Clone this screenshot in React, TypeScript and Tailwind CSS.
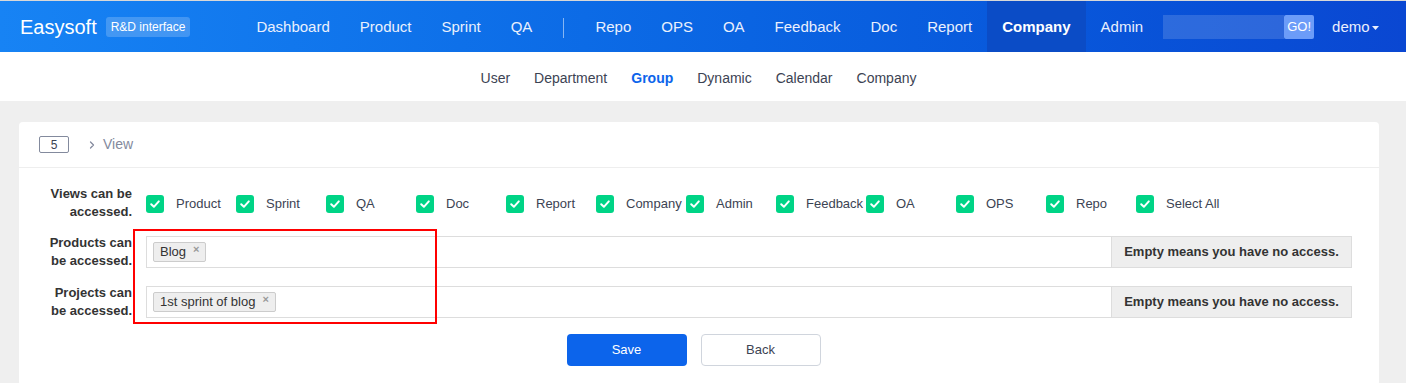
import { ChevronRight } from 'lucide-react';

const mainNav = ['Dashboard', 'Product', 'Sprint', 'QA'];
const rightNav = ['Repo', 'OPS', 'OA', 'Feedback', 'Doc', 'Report'];
const subNav = ['User', 'Department', 'Group', 'Dynamic', 'Calendar', 'Company'];
const views = ['Product', 'Sprint', 'QA', 'Doc', 'Report', 'Company', 'Admin', 'Feedback', 'OA', 'OPS', 'Repo', 'Select All'];

function Check() {
  return (
    <span className="w-[18px] h-[18px] rounded-[3px] bg-[#00d486] flex items-center justify-center shrink-0">
      <svg width="12" height="12" viewBox="0 0 12 12" fill="none">
        <path d="M2.2 6.2 L4.9 8.8 L9.8 3.4" stroke="white" strokeWidth="2" strokeLinecap="round" strokeLinejoin="round" />
      </svg>
    </span>
  );
}

function Tag({ label }: { label: string }) {
  return (
    <span className="inline-flex items-center h-[20px] pl-[6px] pr-[6px] bg-[#eee] border border-[#ccc] rounded-[2px] text-[13px] text-[#333]">
      {label}
      <span className="ml-[7px] text-[11px] text-[#999] leading-none -mt-[5px] font-bold">×</span>
    </span>
  );
}

function ChosenRow({ label, tag }: { label: [string, string]; tag: string }) {
  return (
    <div className="flex items-center mt-[14px]">
      <div className="w-[93px] text-right font-bold text-[13px] leading-[18px] text-[#333]">
        {label[0]}<br />{label[1]}
      </div>
      <div className="ml-[14px] flex-1 flex h-[32px]">
        <div className="flex-1 border border-[#ddd] border-r-0 flex items-center pl-[6px]">
          <Tag label={tag} />
        </div>
        <div className="w-[241px] bg-[#eee] border border-[#ddd] flex items-center justify-center font-bold text-[13px] text-[#333]">
          Empty means you have no access.
        </div>
      </div>
    </div>
  );
}

export default function App() {
  return (
    <div className="min-h-[383px] bg-[#efefef] font-['Liberation_Sans',Arial,sans-serif]">
      <header className="border-t border-[#d8d8d8] h-[52px] bg-gradient-to-r from-[#1783f4] to-[#0a47d2] flex items-center text-white">
        <span className="ml-[20px] text-[20px] leading-none">Easysoft</span>
        <span className="ml-[9px] h-[20px] px-[5px] rounded-[3px] bg-white/20 text-[12px] flex items-center">R&amp;D interface</span>
        <nav className="ml-[51px] flex items-center h-full text-[15px] text-[#eaf0fd] pt-[2px]">
          {mainNav.map((n) => (
            <span key={n} className="px-[15px]">{n}</span>
          ))}
          <span className="mx-[16px] w-px h-[20px] bg-white/50" />
          {rightNav.map((n) => (
            <span key={n} className="px-[15px]">{n}</span>
          ))}
          <span className="px-[15px] -mt-[2px] h-[51px] flex items-center pt-[2px] bg-[#0b4cc6] font-bold text-white">Company</span>
          <span className="px-[15px]">Admin</span>
        </nav>
        <div className="ml-[5px] flex h-[24px]">
          <div className="w-[121px] bg-white/15" />
          <span className="w-[30px] bg-[#6c9cf8] rounded-[2px] text-[13px] flex items-center justify-center">GO!</span>
        </div>
        <span className="ml-[18px] pt-[2px] text-[15px] text-[#eaf0fd] flex items-center">
          demo
          <svg width="7" height="4" viewBox="0 0 7 4" className="ml-[2px]"><path d="M0 0 H7 L3.5 4 Z" fill="#eaf0fd" /></svg>
        </span>
      </header>

      <div className="h-[49px] bg-white flex items-center justify-center pr-[9px] pt-[3px] gap-[24px] text-[14px] text-[#3c4353]">
        {subNav.map((n) => (
          <span key={n} className={n === 'Group' ? 'font-bold text-[#0c64eb]' : ''}>{n}</span>
        ))}
      </div>

      <div className="ml-[19px] mr-[27px] mt-[21px] bg-white rounded-[4px] pb-[20px]">
        <div className="h-[46px] border-b border-[#eee] flex items-center pl-[20px] text-[14px] text-[#838a9d]">
          <span className="w-[30px] h-[17px] border border-[#838a9d] rounded-[2px] text-[12px] text-[#3c4353] flex items-center justify-center">5</span>
          <ChevronRight className="ml-[17px] w-[12px] h-[12px]" strokeWidth={2.5} />
          <span className="ml-[5px]">View</span>
        </div>

        <div className="pl-[20px] pr-[27px] pt-[17px]">
          <div className="flex items-center">
            <div className="w-[93px] text-right font-bold text-[13px] leading-[18px] text-[#333]">
              Views can be<br />accessed.
            </div>
            <div className="ml-[14px] flex pt-[2px]">
              {views.map((v) => (
                <div key={v} className="w-[90px] flex items-center">
                  <Check />
                  <span className="ml-[12px] text-[13px] text-[#3c4353] whitespace-nowrap">{v}</span>
                </div>
              ))}
            </div>
          </div>

          <div className="relative flex flex-col -mt-[1px]">
            <ChosenRow label={['Products can', 'be accessed.']} tag="Blog" />
            <ChosenRow label={['Projects can', 'be accessed.']} tag="1st sprint of blog" />
            <div className="absolute left-[94px] top-[9px] w-[304px] h-[95px] border-2 border-[#ff0000] pointer-events-none" />
          </div>

          <div className="mt-[14px] flex justify-center gap-[14px] pr-[4px]">
            <button className="w-[120px] h-[32px] bg-[#0c64eb] rounded-[4px] text-white text-[13px]">Save</button>
            <button className="w-[120px] h-[32px] bg-white border border-[#d0d5dd] rounded-[4px] text-[#3c4353] text-[13px]">Back</button>
          </div>
        </div>
      </div>
    </div>
  );
}
